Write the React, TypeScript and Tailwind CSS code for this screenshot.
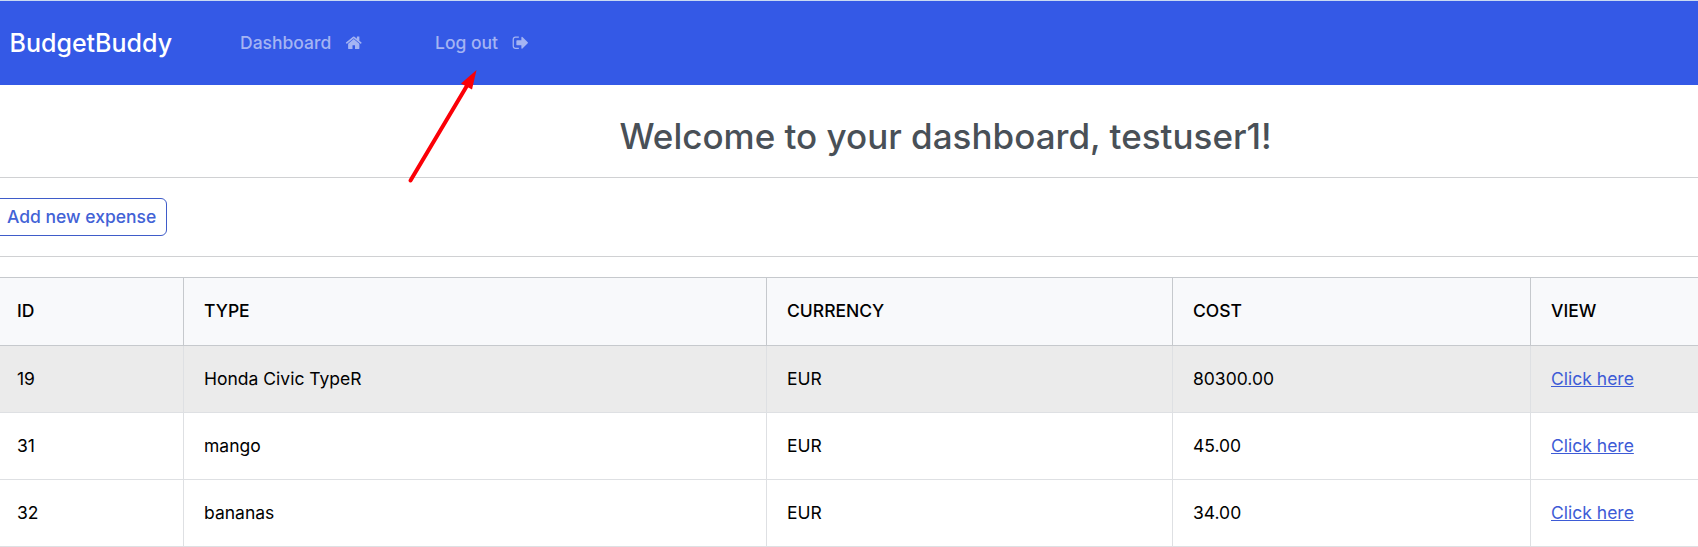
import React from "react";

const expenses = [
  { id: "19", type: "Honda Civic TypeR", currency: "EUR", cost: "80300.00" },
  { id: "31", type: "mango", currency: "EUR", cost: "45.00" },
  { id: "32", type: "bananas", currency: "EUR", cost: "34.00" },
];

function HomeIcon() {
  return (
    <svg className="ml-[14px] size-[17.5px]" viewBox="0 0 1792 1792" fill="currentColor">
      <path d="M1472 992v480q0 26-19 45t-45 19h-384v-384h-256v384h-384q-26 0-45-19t-19-45v-480q0-1 .5-3t.5-3l575-474 575 474q1 2 1 6zm223-69l-62 74q-8 9-21 11h-3q-13 0-21-7l-692-577-692 577q-12 8-24 7-13-2-21-11l-62-74q-8-10-7-23.500t11-21.500l719-599q32-26 76-26t76 26l244 204v-195q0-14 9-23t23-9h192q14 0 23 9t9 23v408l219 182q10 8 11 21.500t-7 23.500z" />
    </svg>
  );
}

function SignOutIcon() {
  return (
    <svg className="ml-[14px] size-[17.5px]" viewBox="0 0 1792 1792" fill="currentColor">
      <path d="M704 1440q0 4 1 20t.5 26.500-3 23.500-10 19.500-20.500 6.500h-320q-119 0-203.500-84.500t-84.500-203.500v-704q0-119 84.500-203.500t203.500-84.500h320q13 0 22.500 9.500t9.500 22.500q0 4 1 20t.5 26.500-3 23.500-10 19.500-20.500 6.500h-320q-66 0-113 47t-47 113v704q0 66 47 113t113 47h312l11.500 1 11.500 3 8 5.500 7 9 2 13.500zm928-544q0 26-19 45l-544 544q-19 19-45 19t-45-19-19-45v-288h-448q-26 0-45-19t-19-45v-384q0-26 19-45t45-19h448v-288q0-26 19-45t45-19 45 19l544 544q19 19 19 45z" />
    </svg>
  );
}

function Arrow() {
  return (
    <svg className="pointer-events-none absolute left-[400px] top-[64px] h-[124px] w-[84px]" viewBox="400 64 84 124">
      <path d="M410.500 180.500L468 84" stroke="#fb0007" strokeWidth="4" strokeLinecap="round" />
      <path d="M476.500 70L472 89.500L461 83.500Z" fill="#fb0007" />
    </svg>
  );
}

export default function App() {
  return (
    <div className="relative h-[547px] w-full overflow-hidden bg-white font-['Inter',sans-serif] text-[17.5px] leading-7 text-black">
      <nav className="flex h-[85px] items-center border-t border-[#c9d9f2] bg-[#3459e6] font-medium text-[#a4b4f3]">
        <a className="w-[240px] pl-[9.5px] text-[25px] text-white">BudgetBuddy</a>
        <a className="flex w-[195px] items-center">
          Dashboard
          <HomeIcon />
        </a>
        <a className="flex items-center">
          Log out
          <SignOutIcon />
        </a>
      </nav>
      <h1 className="flex h-[93px] items-center border-b border-[#d0d1d3] pl-[619.5px] pt-[9px] text-[35px] font-medium text-[#495057]">
        Welcome to your dashboard, testuser1!
      </h1>
      <div className="flex h-[79px] items-center border-b border-[#d0d1d3]">
        <button className="-ml-2 flex h-[38px] w-[175px] items-center rounded-md border border-[#3f5cc9] pl-[14px] font-medium text-[#4262d6]">
          Add new expense
        </button>
      </div>
      <div className="mt-5">
        <div className="grid h-[69px] grid-cols-[184px_583px_406px_358px_1fr] border-y border-[#c6c9cd] bg-[#f8f9fb] font-medium">
          <div className="flex items-center border-r border-[#c6c9cd] pb-px pl-[17px]">ID</div>
          <div className="flex items-center border-r border-[#c6c9cd] pb-px pl-5">TYPE</div>
          <div className="flex items-center border-r border-[#c6c9cd] pb-px pl-5">CURRENCY</div>
          <div className="flex items-center border-r border-[#c6c9cd] pb-px pl-5">COST</div>
          <div className="flex items-center pb-px pl-5">VIEW</div>
        </div>
        {expenses.map((e, i) => (
          <div
            key={e.id}
            className={`grid h-[67px] grid-cols-[184px_583px_406px_358px_1fr] border-b border-[#dee0e3] ${i === 0 ? "bg-[#ebebeb]" : "bg-white"}`}
          >
            <div className="flex items-center border-r border-[#dee0e3] pl-[17px]">{e.id}</div>
            <div className="flex items-center border-r border-[#dee0e3] pl-5">{e.type}</div>
            <div className="flex items-center border-r border-[#dee0e3] pl-5">{e.currency}</div>
            <div className="flex items-center border-r border-[#dee0e3] pl-5">{e.cost}</div>
            <div className="flex items-center pl-5">
              <a className="text-[#3d5bd6] underline">Click here</a>
            </div>
          </div>
        ))}
      </div>
      <Arrow />
    </div>
  );
}
